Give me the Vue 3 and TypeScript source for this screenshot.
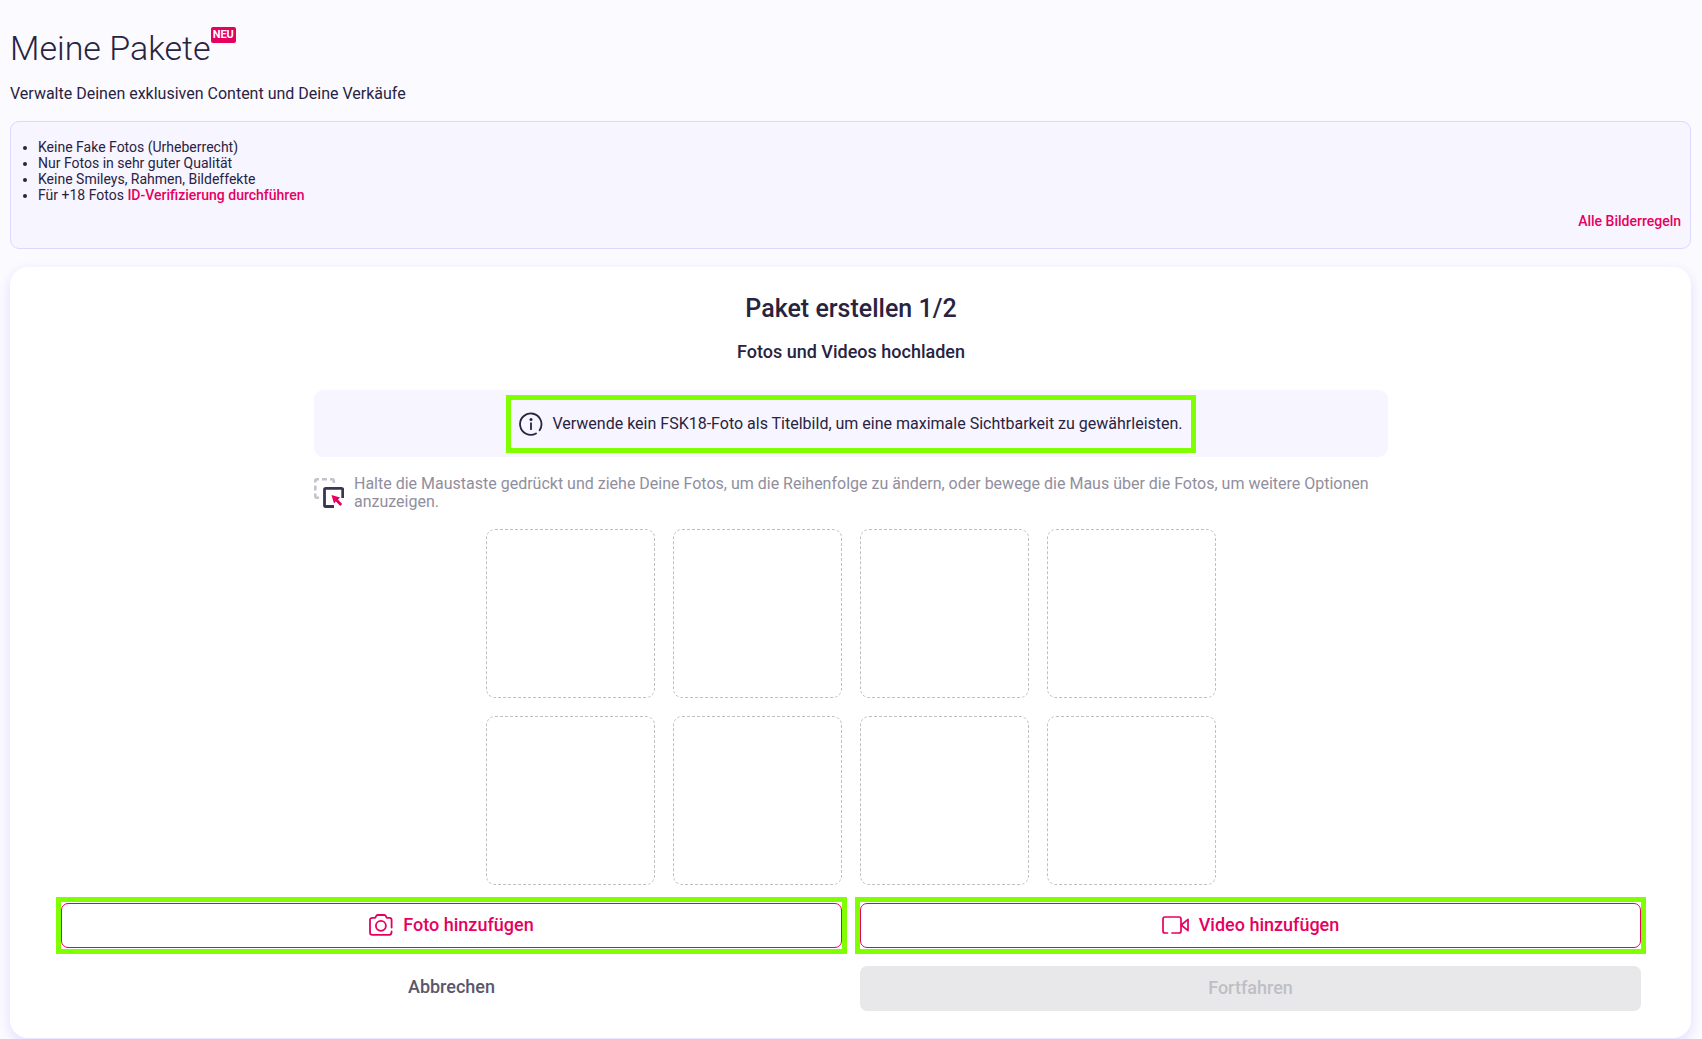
<script setup lang="ts">
const rules: string[] = [
  'Keine Fake Fotos (Urheberrecht)',
  'Nur Fotos in sehr guter Qualität',
  'Keine Smileys, Rahmen, Bildeffekte',
]
const slotCount = 8
</script>

<template>
  <main class="page">
    <header class="head">
      <h1 class="title">Meine Pakete<span class="badge">NEU</span></h1>
      <p class="subtitle">Verwalte Deinen exklusiven Content und Deine Verkäufe</p>
    </header>

    <section class="rules">
      <ul class="rules-list">
        <li v-for="rule in rules" :key="rule">{{ rule }}</li>
        <li>Für +18 Fotos <a href="#" class="link">ID-Verifizierung durchführen</a></li>
      </ul>
      <a href="#" class="link all-rules">Alle Bilderregeln</a>
    </section>

    <section class="card">
      <h2 class="card-title">Paket erstellen 1/2</h2>
      <h3 class="card-subtitle">Fotos und Videos hochladen</h3>

      <div class="content">
        <div class="notice">
          <div class="notice-mark">
            <svg class="info-icon" viewBox="0 0 24 24" fill="none" stroke="currentColor" stroke-width="1.8" stroke-linecap="round">
              <path d="M17 21.500A10.700 10.700 0 1 1 20.600 18.200" />
              <path d="M12 11.200v6" />
              <circle cx="12" cy="7.600" r="1.500" fill="currentColor" stroke="none" />
            </svg>
            <p>Verwende kein FSK18-Foto als Titelbild, um eine maximale Sichtbarkeit zu gewährleisten.</p>
          </div>
        </div>

        <div class="hint">
          <svg class="drag-icon" viewBox="0 0 30 30" fill="none">
            <path d="M1.300 4.500V3Q1.300 1.300 3 1.300H5M8 1.300h5M16 1.300h2Q19.800 1.300 19.800 3V5M1.300 7.500v5M1.300 15.500v2.500Q1.300 19.800 3 19.800H5" stroke="#c4c3cc" stroke-width="2.600" />
            <path d="M28.700 20V11.500Q28.700 10.300 27.500 10.300H11.700Q10.500 10.300 10.500 11.500V27.300Q10.500 28.500 11.700 28.500H20" stroke="#3b3554" stroke-width="2.800" />
            <path d="M17.500 17L26 19.500L23.900 21.600L28.200 25.900L26.200 27.900L21.900 23.600L20 25.500Z" fill="#e6005f" />
          </svg>
          <p>Halte die Maustaste gedrückt und ziehe Deine Fotos, um die Reihenfolge zu ändern, oder bewege die Maus über die Fotos, um weitere Optionen anzuzeigen.</p>
        </div>

        <div class="slots">
          <div v-for="n in slotCount" :key="n" class="slot"></div>
        </div>
      </div>

      <div class="upload-row">
        <div class="mark">
          <button type="button" class="btn outline">
            <svg class="camera-icon" viewBox="0 0 24 22" fill="none" stroke="currentColor" stroke-width="1.8" stroke-linecap="round" stroke-linejoin="round">
              <path d="M22.600 13.500V6Q22.600 3.800 20.600 3.800H17.800L16.400 1.600Q16 1 15.200 1H8.800Q8 1 7.600 1.600L6.200 3.800H3.400Q1 3.800 1 6V18.400Q1 20.800 3.400 20.800H20.400Q22.600 20.800 22.600 17.500" />
              <circle cx="11.900" cy="11.800" r="5" />
            </svg>
            <span>Foto hinzufügen</span>
          </button>
        </div>
        <div class="mark">
          <button type="button" class="btn outline">
            <svg class="video-icon" viewBox="0 0 27 18" fill="none" stroke="currentColor" stroke-width="1.700" stroke-linecap="round" stroke-linejoin="round">
              <path d="M5.500 17H3Q1 17 1 15V3Q1 1 3 1H17Q19 1 19 3V15Q19 17 17 17H10" />
              <path d="M19.200 9L26 3.400V14.600Z" />
            </svg>
            <span>Video hinzufügen</span>
          </button>
        </div>
      </div>

      <div class="nav-row">
        <button type="button" class="btn plain">Abbrechen</button>
        <button type="button" class="btn solid" disabled>Fortfahren</button>
      </div>
    </section>
  </main>
</template>

<style>
body {
  margin: 0;
  background: #fbfaff;
}
</style>

<style scoped>
* {
  box-sizing: border-box;
}

.page {
  padding: 27px 11px 1px 10px;
  font-family: Roboto, "Liberation Sans", sans-serif;
  font-size: 16px;
  line-height: 18px;
  color: #28233f;
}

h1, h2, h3, p, ul {
  margin: 0;
  padding: 0;
}

.title {
  display: flex;
  align-items: flex-start;
  font-size: 34px;
  line-height: 42px;
  font-weight: 300;
}

.badge {
  padding: 0 2px;
  border-radius: 2px;
  background: #e6005f;
  color: #fff;
  font-size: 11px;
  line-height: 16px;
  font-weight: 700;
}

.subtitle {
  margin-top: 16px;
}

.rules {
  display: flex;
  flex-direction: column;
  min-height: 128px;
  margin-top: 18px;
  padding: 17px 9px;
  border: 1px solid #ddd8ff;
  border-radius: 9px;
  background: #f7f5ff;
  font-size: 14px;
  line-height: 16px;
}

.rules-list {
  padding-left: 18px;
}

.link {
  color: #e6005f;
  font-weight: 500;
  text-decoration: none;
}

.all-rules {
  align-self: flex-end;
  margin-top: 10px;
}

.card {
  margin-top: 18px;
  padding: 27px 45px 27px 46px;
  border-radius: 18px;
  background: #fff;
  box-shadow: 0 4px 12px #e2deff;
}

.card-title {
  font-size: 25px;
  line-height: 29px;
  font-weight: 500;
  text-align: center;
}

.card-subtitle {
  margin-top: 18px;
  font-size: 18px;
  line-height: 21px;
  font-weight: 500;
  text-align: center;
}

.content {
  max-width: 1074px;
  margin: 28px auto 0;
}

.notice {
  display: flex;
  justify-content: center;
  padding: 5px 0 4px;
  border-radius: 9px;
  background: #f7f5ff;
}

.notice-mark {
  display: flex;
  align-items: center;
  gap: 9px;
  min-height: 58px;
  padding: 0 8px;
  border: 5px solid #80ff00;
}

.info-icon {
  flex: none;
  width: 24px;
  height: 24px;
}

.hint {
  display: flex;
  align-items: center;
  gap: 10px;
  margin-top: 18px;
  color: #918e9d;
}

.drag-icon {
  flex: none;
  width: 30px;
  height: 30px;
}

.slots {
  display: grid;
  grid-template-columns: repeat(4, 169px);
  justify-content: center;
  gap: 18px;
  margin-top: 18px;
}

.slot {
  aspect-ratio: 1;
  border: 1px dashed #bfbec5;
  border-radius: 9px;
}

.upload-row {
  display: grid;
  grid-template-columns: 1fr 1fr;
  gap: 8px;
  margin-top: 12px;
}

.mark {
  padding: 1px 0;
  border: 5px solid #80ff00;
}

.nav-row {
  display: grid;
  grid-template-columns: 1fr 1fr;
  gap: 18px;
  margin-top: 12px;
  padding: 0 5px;
}

.btn {
  display: flex;
  align-items: center;
  justify-content: center;
  width: 100%;
  height: 45px;
  padding: 0 0 2px;
  border: 0;
  border-radius: 7px;
  background: transparent;
  font-family: inherit;
  font-size: 18px;
  line-height: 21px;
  font-weight: 500;
}

.outline {
  gap: 10px;
  border: 1px solid #e6005f;
  color: #e6005f;
}

.plain {
  height: 43px;
  color: #5a566b;
}

.solid {
  background: #e8e8ea;
  color: #bfbec5;
}

.camera-icon {
  width: 24px;
  height: 22px;
}

.video-icon {
  width: 27px;
  height: 18px;
}
</style>
